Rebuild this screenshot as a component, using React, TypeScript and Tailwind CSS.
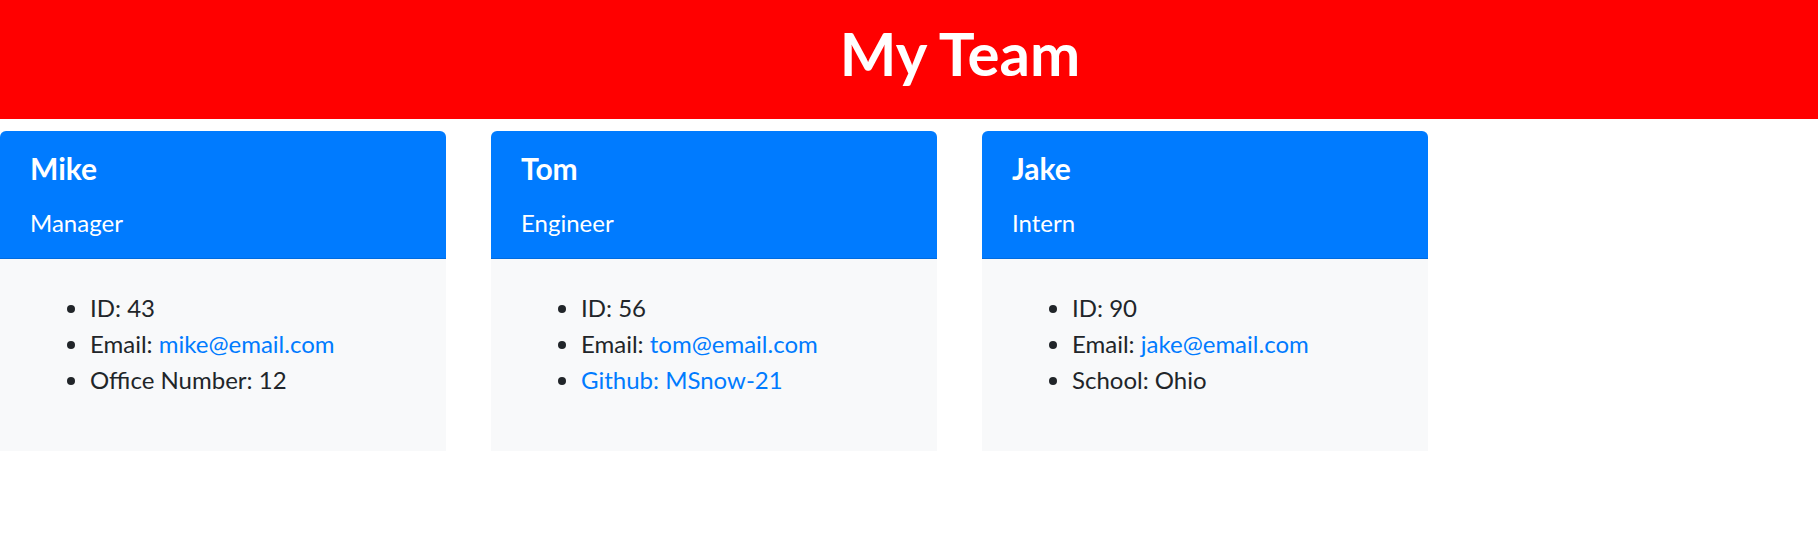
import React from 'react'

type Member = {
  name: string
  role: string
  id: number
  email: string
  extra: { label: string; value: string; link?: boolean }
}

const team: Member[] = [
  { name: 'Mike', role: 'Manager', id: 43, email: 'mike@email.com', extra: { label: 'Office Number', value: '12' } },
  { name: 'Tom', role: 'Engineer', id: 56, email: 'tom@email.com', extra: { label: 'Github', value: 'MSnow-21', link: true } },
  { name: 'Jake', role: 'Intern', id: 90, email: 'jake@email.com', extra: { label: 'School', value: 'Ohio' } },
]

function MemberCard({ member }: { member: Member }) {
  return (
    <div className="w-[446px] flex flex-col rounded-t-[6px] overflow-hidden">
      <div className="bg-[#007bff] text-white px-[30px] pt-[19px] pb-[21px] border-b border-black/[0.125]">
        <h2 className="text-[30px] leading-[36px] font-bold">{member.name}</h2>
        <h3 className="mt-[22px] text-[24px] leading-[29px] font-normal">{member.role}</h3>
      </div>
      <div className="bg-[#f8f9fa] pt-[31px] px-[30px] pb-[29px]">
        <ul className="list-disc pl-[60px] mb-[24px] text-[24px] leading-[36px] text-[#212529]">
          <li>ID: {member.id}</li>
          <li>
            Email: <a href={`mailto:${member.email}`} className="text-[#007bff]">{member.email}</a>
          </li>
          {member.extra.link ? (
            <li>
              <a href="#" className="text-[#007bff]">
                {member.extra.label}: {member.extra.value}
              </a>
            </li>
          ) : (
            <li>
              {member.extra.label}: {member.extra.value}
            </li>
          )}
        </ul>
      </div>
    </div>
  )
}

export default function App() {
  return (
    <div className="min-h-screen bg-white font-['Lato','Open_Sans',sans-serif]">
      <header className="bg-[#ff0000] h-[119px] pt-[17px] pl-[102px] text-center">
        <h1 className="text-white text-[60px] leading-[72px] font-bold">My Team</h1>
      </header>
      <main className="mt-[12px] flex gap-[45px]">
        {team.map((m) => (
          <MemberCard key={m.name} member={m} />
        ))}
      </main>
    </div>
  )
}
